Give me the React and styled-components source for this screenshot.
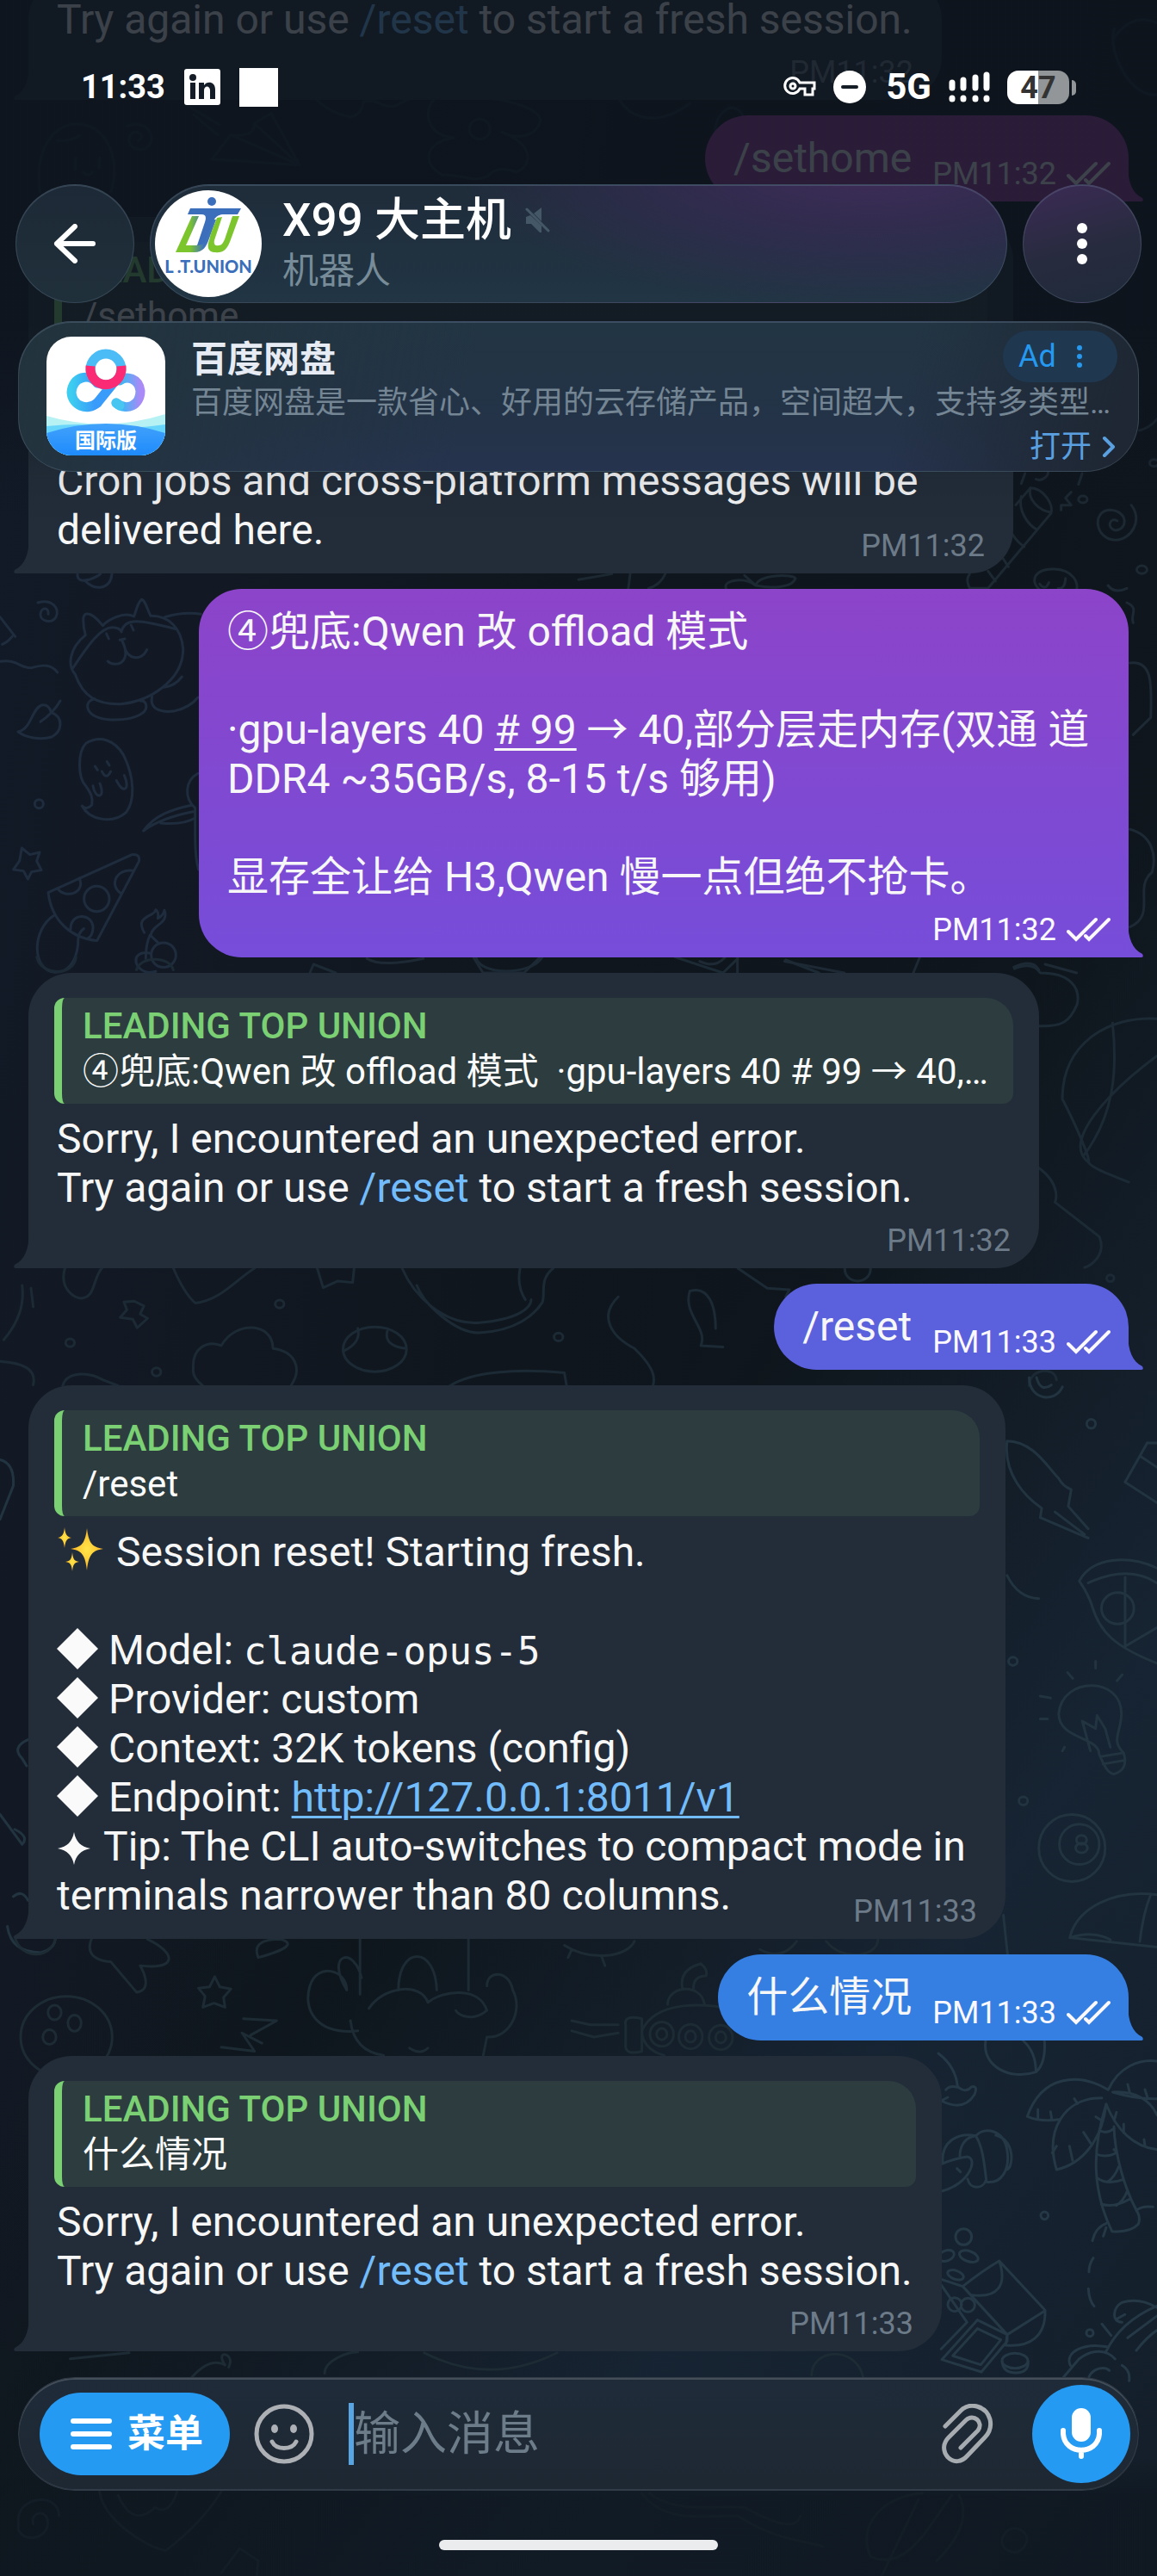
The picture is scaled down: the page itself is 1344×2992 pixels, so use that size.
import React from "react";
import styled, { createGlobalStyle } from "styled-components";

const GlobalStyle = createGlobalStyle`
  *, *::before, *::after { box-sizing: border-box; }
  body { margin: 0; background: #0f161d; }
  button, input { font: inherit; color: inherit; border: 0; padding: 0; background: none; outline: none; }
  a { color: inherit; }
  svg { display: block; flex: none; }
`;

const sans = `Roboto, "Noto Sans CJK SC", sans-serif`;
const accent = "#249af2";

const Screen = styled.div`
  position: relative;
  display: flex;
  flex-direction: column;
  height: 100vh;
  overflow: hidden;
  font-family: ${sans};
  color: #f7f7f8;
  background: linear-gradient(98deg, #121a28 0%, #121924 18%, #0f161d 45%, #0f151c 68%, #10171f 100%);
`;

const Shade = styled.div`
  position: absolute;
  inset: 0;
  background: linear-gradient(125deg, transparent 50%, rgba(14, 22, 28, 0.6) 58%, rgba(24, 38, 54, 0.85) 78%, rgba(20, 32, 44, 0.8) 100%);
`;

const Wallpaper = styled.svg`
  position: absolute;
  inset: 0;
  width: 100%;
  height: 100%;
  fill: none;
  stroke-linecap: round;
  stroke-linejoin: round;
  & path, & circle, & ellipse { vector-effect: non-scaling-stroke; stroke-width: 3px; }
`;

/* ---------- messages ---------- */

const Messages = styled.main`
  position: relative;
  flex: 1;
  min-height: 0;
  display: flex;
  flex-direction: column;
  justify-content: flex-end;
  gap: 18px;
  padding: 0 33px 30px;
`;

const Bubble = styled.article`
  position: relative;
  flex: none;
  width: ${(p) => (p.$max ? "100%" : "fit-content")};
  max-width: ${(p) => (p.$max ? `${p.$max}px` : "100%")};
  align-self: ${(p) => (p.$out ? "flex-end" : "flex-start")};
  padding: ${(p) => (p.$reply ? "29px 30px 11px" : p.$out ? "21px 21px 11px 30px" : "21px 30px 11px")};
  border-radius: ${(p) => (p.$out ? "50px 50px 0 50px" : "50px 50px 50px 0")};
  background: ${(p) => p.$fill || "#222d39"};
`;

const TailShape = styled.svg`
  position: absolute;
  bottom: 0;
  width: 18px;
  height: 40px;
  ${(p) => (p.$out ? "left: calc(100% - 1px);" : "right: calc(100% - 1px);")}
`;

const Content = styled.div`
  display: ${(p) => (p.$side ? "flex" : "grid")};
  gap: ${(p) => (p.$side ? "24px" : "0")};
`;

const Copy = styled.p`
  grid-area: 1 / 1;
  margin: 0 0 ${(p) => (p.$below ? "54px" : "11px")};
  padding-left: 3px;
  font-size: 48px;
  line-height: 57px;
  white-space: pre-wrap;
`;

const Stamp = styled.time`
  grid-area: 1 / 1;
  align-self: end;
  justify-self: end;
  display: flex;
  gap: 12px;
  padding-right: ${(p) => (p.$out ? "0" : "3px")};
  font-size: 36px;
  line-height: 42px;
  white-space: nowrap;
  color: ${(p) => (p.$out ? "#fbf9ff" : "#6d7b89")};
`;

const Quote = styled.blockquote`
  margin: 0 0 12px;
  height: 123px;
  padding: 6px 26px 0 24px;
  border-left: 9px solid #7ad073;
  border-radius: 12px 32px 12px 12px;
  background: #2c3c3f;
  font-size: 42px;
  line-height: 53px;
  color: #fcfcfc;
`;

const QuoteName = styled.div`
  font-weight: 500;
  color: #7ad073;
`;

const QuoteText = styled.div`
  overflow: hidden;
  white-space: pre;
  text-overflow: ellipsis;
`;

const Command = styled.a`
  color: #73bcfc;
  text-decoration: ${(p) => (p.$line ? "underline" : "none")};
  text-decoration-thickness: 3px;
  text-underline-offset: 5px;
`;

const Under = styled.u`
  text-decoration-thickness: 3px;
  text-underline-offset: 5px;
`;

const Mono = styled.code`
  font-family: "DejaVu Sans Mono", "Liberation Mono", monospace;
  font-size: 44px;
  line-height: 50px;
`;

const Glyph = styled.svg`
  display: inline-block;
  vertical-align: -6px;
  margin-right: ${(p) => p.$gap}px;
`;

/* ---------- header ---------- */

const Header = styled.header`
  position: absolute;
  inset: 0 0 auto;
  padding-bottom: 80px;
  background: linear-gradient(rgba(13, 20, 29, 0.8) 60%, rgba(13, 20, 29, 0.1) 88%, transparent 97%);
`;

const StatusBar = styled.div`
  display: flex;
  align-items: center;
  height: 214px;
  padding: 0 102px 12px 94px;
  color: #fff;
`;

const Clock = styled.span`
  width: 120px;
  font: 700 38px/50px ${sans};
`;

const WhiteSquare = styled.span`
  width: 45px;
  height: 45px;
  margin-left: 22px;
  background: #fff;
`;

const StatusRight = styled.div`
  display: flex;
  align-items: center;
  gap: 20px;
  margin-left: auto;
`;

const Network = styled.span`
  padding-left: 3px;
  font: 700 42px/50px ${sans};
`;

const Battery = styled.span`
  position: relative;
  width: 72px;
  height: 39px;
  border-radius: 13px;
  background: linear-gradient(90deg, #fff 50%, #929698 50%);
  color: #333;
  font: 700 36px/40px ${sans};
  text-align: center;
  &::after {
    content: "";
    position: absolute;
    left: 75px;
    top: 11px;
    width: 5px;
    height: 18px;
    border-radius: 0 5px 5px 0;
    background: #929698;
  }
`;

const Toolbar = styled.div`
  display: flex;
  gap: 18px;
  padding: 0 18px;
`;

const glass = `
  border: 1px solid rgba(120, 145, 165, 0.28);
  box-shadow: inset 0 1px 0 rgba(140, 160, 185, 0.25);
`;

const RoundButton = styled.button`
  ${glass}
  flex: none;
  display: grid;
  place-items: center;
  width: 138px;
  height: 138px;
  border-radius: 50%;
  background: ${(p) => p.$fill};
`;

const TitlePill = styled.div`
  ${glass}
  flex: 1;
  display: flex;
  align-items: center;
  gap: 24px;
  height: 138px;
  padding-left: 5px;
  border-radius: 69px;
  background:
    radial-gradient(ellipse 480px 170px at 84% -20%, rgba(66, 44, 92, 0.95), rgba(56, 43, 86, 0.65) 50%, transparent),
    linear-gradient(#1f2c3a, #213544);
`;

const TitleBlock = styled.div`
  display: flex;
  flex-direction: column;
`;

const Title = styled.h1`
  display: flex;
  align-items: center;
  gap: 16px;
  margin: 0;
  font-size: 53px;
  font-weight: 500;
  line-height: 64px;
  color: #fff;
`;

const Subtitle = styled.span`
  font-size: 42px;
  line-height: 54px;
  color: #778c98;
`;

const Ad = styled.section`
  ${glass}
  display: flex;
  gap: 30px;
  height: 175px;
  margin: 21px 21px 0;
  padding: 17px 24px 0 32px;
  border-radius: 62px;
  background: linear-gradient(100deg, #22333d 0%, rgba(34, 51, 61, 0) 40%),
    linear-gradient(285deg, #1e2733 3%, transparent 22%),
    linear-gradient(#223543, #243348 70%, #26334e);
`;

const AdBody = styled.div`
  flex: 1;
  min-width: 0;
  display: flex;
  flex-direction: column;
  padding-top: 2px;
`;

const AdRow = styled.div`
  display: flex;
  justify-content: space-between;
`;

const AdTitle = styled.h2`
  margin: 0;
  font-size: 42px;
  line-height: 50px;
  font-weight: 700;
  color: #e6ebf4;
`;

const AdText = styled.p`
  margin: 0;
  overflow: hidden;
  font-size: 36px;
  line-height: 50px;
  white-space: nowrap;
  text-overflow: ellipsis;
  color: #748594;
`;

const AdBadge = styled.button`
  display: flex;
  align-items: center;
  gap: 24px;
  width: 133px;
  height: 60px;
  margin: -9px 0 -1px;
  padding-left: 18px;
  border-radius: 30px;
  background: #1f374f;
  color: #2599f0;
  font-size: 36px;
`;

const AdOpen = styled.a`
  display: flex;
  align-items: center;
  align-self: flex-end;
  gap: 12px;
  margin-right: 2px;
  font-size: 36px;
  line-height: 52px;
  text-decoration: none;
  color: #5aa0e0;
`;

/* ---------- composer ---------- */

const Footer = styled.footer`
  position: relative;
  padding: 0 21px 30px;
  background: linear-gradient(transparent 40%, rgba(14, 22, 30, 0.65) 60%);
`;

const Composer = styled.form`
  display: flex;
  align-items: center;
  height: 132px;
  padding: 0 9px 0 24px;
  border-radius: 66px;
  border: 1px solid #303b47;
  box-shadow: inset 0 2px 0 #434e59, inset 0 -1px 0 #303b47;
  background: linear-gradient(#1f2b39, #1e2833);
`;

const MenuButton = styled.button`
  display: flex;
  align-items: center;
  gap: 18px;
  height: 96px;
  padding: 0 31px 0 36px;
  border-radius: 48px;
  background: ${accent};
  color: #fff;
  font-size: 44px;
  font-weight: 700;
  line-height: 60px;
`;

const IconButton = styled.button`
  display: grid;
  place-items: center;
  width: ${(p) => p.$w}px;
  height: 96px;
`;

const Caret = styled.span`
  width: 6px;
  height: 72px;
  margin-left: 12px;
  background: #57a5e2;
`;

const Field = styled.input`
  flex: 1;
  min-width: 0;
  height: 90px;
  font-size: 54px;
  &::placeholder { color: #6d7c89; opacity: 1; }
`;

const MicButton = styled.button`
  display: grid;
  place-items: center;
  width: 114px;
  height: 114px;
  margin-left: 30px;
  border-radius: 50%;
  background: ${accent};
`;

const HomeBar = styled.div`
  width: 324px;
  height: 12px;
  margin: 57px auto 0;
  border-radius: 6px;
  background: #ebecee;
`;

/* ---------- drawings ---------- */

const Tail = ({ out, fill }) => (
  <TailShape $out={out} viewBox="0 0 18 40" aria-hidden="true">
    <path
      fill={fill}
      d={out ? "M0 0C1 18 5 30 17 36Q19 40 16 40H0Z" : "M18 0C17 18 13 30 1 36Q-1 40 2 40H18Z"}
    />
  </TailShape>
);

const Checks = () => (
  <svg width="51" height="42" viewBox="0 0 51 42" fill="none" stroke="currentColor" strokeWidth="4" strokeLinecap="round" aria-hidden="true">
    <path d="M2 23 11 32 34 9" />
    <path d="M22 28 26 32 49 9" />
  </svg>
);

const Diamond = () => (
  <Glyph $gap={12} width="48" height="48" viewBox="0 0 48 48" aria-hidden="true">
    <path d="M24 0 48 24 24 48 0 24Z" fill="#fafafa" />
  </Glyph>
);

const Star = () => (
  <Glyph $gap={14} width="40" height="40" viewBox="0 0 40 40" aria-hidden="true">
    <path d="M20 1C22 12 28 18 39 20 28 22 22 28 20 39 18 28 12 22 1 20 12 18 18 12 20 1Z" fill="#fafafa" />
  </Glyph>
);

const Sparkles = () => (
  <Glyph $gap={14} width="55" height="52" viewBox="0 0 55 52" aria-hidden="true">
    <defs>
      <radialGradient id="gold">
        <stop offset="0" stopColor="#ffe54a" />
        <stop offset="0.6" stopColor="#fcc934" />
        <stop offset="1" stopColor="#f0a32c" />
      </radialGradient>
    </defs>
    <g fill="url(#gold)">
      <path d="M35 2C37 18 40 24 54 26 40 28 37 34 35 51 33 34 30 28 16 26 30 24 33 18 35 2Z" />
      <path d="M9 1C10 10 12 12 17 13 12 14 10 16 9 25 8 16 6 14 1 13 6 12 8 10 9 1Z" />
      <path d="M18 30C19 38 20 40 26 41 20 42 19 44 18 52 17 44 16 42 10 41 16 40 17 38 18 30Z" />
    </g>
  </Glyph>
);

const Doodles = () => (
  <Wallpaper viewBox="0 0 1344 2992" preserveAspectRatio="xMidYMid slice" aria-hidden="true">
    <g stroke="#1e2c3d" transform="translate(0 650) scale(0.3333)">
      <path d="M270 50Q268 80 310 70Q340 60 350 50M295 72C330 110 385 105 390 50" />
      <path d="M132 150C180 135 210 170 195 200C180 225 140 215 141 190C143 165 172 165 168 190" />
      <path d="M0 200 53 268M8 295Q30 285 42 268M0 355C60 345 70 380 110 377C150 365 180 365 200 393" />
      <path d="M298 263C240 310 235 370 262 400C290 480 340 505 420 503C520 495 640 420 638 310C632 240 590 195 525 196C510 165 505 140 493 139C480 150 475 175 467 198C430 180 375 210 358 230C330 195 300 175 291 200Q288 230 298 263M254 378C290 325 350 225 400 237Q420 240 423 252C435 200 490 210 612 242" />
      <path d="M371 258 379 276M457 228 465 246M418 280 435 276M425 282C450 330 435 365 400 364Q385 364 376 354M437 315C455 350 495 350 512 314" />
      <path d="M330 485C290 490 290 555 390 558C480 560 520 530 507 500Q500 490 490 492M530 478C520 520 560 535 610 527C640 520 670 505 690 480M572 445Q610 440 634 408M575 200Q640 180 700 190" />
      <path d="M63 600C110 590 110 520 145 507Q170 503 178 532C225 550 215 600 180 618C140 630 90 620 63 600M141 565Q185 535 210 492" />
      <path d="M300 790C270 760 270 670 300 640C350 610 400 630 430 680C470 760 470 840 440 880C390 925 310 905 286 858Q300 875 320 855C325 820 312 810 300 790M331 720 340 733M373 704 381 717M355 738Q370 770 386 738M324 788C330 835 370 835 348 780M406 770C430 820 455 800 433 752" />
      <circle cx="136" cy="851" r="15" />
      <path d="M76 1005 104 1028 138 1020 128 1050 144 1082 110 1088 97 1113 82 1085 47 1080 68 1050Z" />
      <path d="M168 1160 460 1028Q490 1025 484 1052L338 1328C250 1320 180 1260 168 1160ZM200 1146C230 1185 300 1160 276 1110M465 1084C400 1075 380 1140 424 1164M246 1288C245 1230 320 1230 324 1280Q325 1310 304 1322M292 1286Q270 1300 272 1340C265 1410 230 1440 190 1438C110 1430 110 1290 188 1240" />
      <circle cx="337" cy="1182" r="44" />
      <circle cx="570" cy="1378" r="43" />
      <path d="M543 1435C500 1450 460 1410 478 1382Q495 1365 524 1372M508 1390Q508 1340 523 1308L550 1334M503 1300C480 1260 500 1250 530 1235Q540 1230 543 1220Q555 1230 550 1250Q570 1240 573 1222C590 1270 530 1270 525 1310" />
      <path d="M500 945C540 890 600 870 670 855M500 945Q560 900 680 877M560 918Q640 925 680 900M690 745C645 770 640 830 680 865V960Q680 1040 692 1080" />
    </g>
    <g stroke="#253845" transform="translate(1090 2370) scale(0.3333)">
      <path d="M165 0C150 90 250 140 340 110Q375 80 370 0M295 0Q340 40 340 108M0 45Q60 90 67 160Q95 185 115 162Q140 155 125 190C100 230 60 235 10 210L33 198M26 172Q40 155 67 163" />
      <path d="M15 425C10 350 70 320 130 332M75 403C75 360 100 335 130 332C155 370 160 430 167 485C155 520 110 520 102 483M133 330C160 300 230 310 240 385C250 450 220 500 168 493M200 330C270 350 260 440 240 450M12 430Q60 410 100 405C140 410 110 500 12 525M65 446 77 458" />
      <path d="M310 265C360 120 490 110 592 172C630 90 700 65 762 72M310 265Q360 285 420 275M570 200C440 200 370 310 412 450C500 430 570 350 585 222M608 180C690 175 740 210 762 260M585 222C620 310 680 370 762 380M608 180Q690 205 762 203" />
      <path d="M347 240V272M391 248 395 272M474 203 485 220M549 266 573 281M506 320 531 358M412 368 397 392M457 368 468 418M621 250 613 277M646 291V322M717 345 720 366M660 153 667 182M720 171 728 196" />
      <path d="M585 222C535 380 535 520 605 665Q670 670 697 640Q705 620 695 600C650 520 615 400 612 300M568 316Q590 325 610 308M553 397Q590 410 622 390L612 380M555 480Q590 505 643 485M628 440Q615 475 590 493M568 570Q610 585 668 552M658 525Q645 560 620 575" />
      <path d="M690 592Q710 575 748 580M586 637Q548 650 537 698M585 652 575 682M540 758Q525 780 525 806M523 865Q525 905 543 926M570 988 602 1028M15 420" />
      <circle cx="370" cy="610" r="13" /><circle cx="88" cy="684" r="28" /><circle cx="528" cy="1019" r="12" /><circle cx="103" cy="922" r="24" /><circle cx="57" cy="920" r="24" />
      <ellipse cx="60" cy="817" rx="29" ry="15" transform="rotate(20 60 817)" />
      <ellipse cx="106" cy="752" rx="34" ry="18" transform="rotate(20 106 752)" />
      <ellipse cx="28" cy="750" rx="28" ry="18" transform="rotate(-20 28 750)" />
      <path d="M85 857Q150 805 212 768L372 940C375 1030 320 1070 235 1062L240 1025 370 943M212 768C240 850 210 900 115 887M85 857 240 1025V1048L150 1155 12 1112 136 974M10 832 85 857M10 852 100 982 10 1075M136 1004 218 1043 148 1130 50 1099ZM136 974 240 1025" />
      <ellipse cx="267" cy="1116" rx="45" ry="26" />
      <path d="M222 1118Q225 1158 270 1158T313 1118M436 1174 490 1110C540 1070 590 1080 616 1110M460 1132C440 1090 500 1050 592 1068M584 1085C620 1010 680 960 762 925M640 982C600 980 610 930 640 913Q700 895 760 930M623 970 650 955M660 1036 762 960M690 1080Q730 1030 762 1010M525 1172C540 1140 580 1135 596 1150M640 1132Q670 1150 665 1186" />
    </g>
    <g stroke="#1c2a35" transform="translate(0 1110) scale(0.857 0.333)">
      <path d="M50 5C55 70 100 75 103 5M185 50C190 0 230 0 235 50M420 60 425 30 455 60M645 5C650 70 720 70 735 5M915 5 980 60 1000 10M1065 15 1110 60M1375 45Q1400 20 1410 60C1450 60 1465 110 1460 170C1450 230 1440 250 1405 245" />
      <path d="M1568 220C1500 210 1440 310 1440 500C1460 600 1480 720 1475 720C1440 650 1500 480 1568 350M1508 235C1515 400 1510 560 1468 700M1408 740C1440 800 1430 860 1430 860L1490 980C1500 1040 1480 1080 1470 1088M1530 790C1500 760 1480 740 1475 720" />
      <path d="M88 1090C80 1160 100 1195 110 1195C130 1190 125 1130 138 1090M235 1090Q250 1180 265 1212C300 1200 320 1130 345 1090M430 1090 438 1158 458 1135 478 1140 480 1090" />
      <path d="M182 1205 195 1222 190 1250 200 1265 186 1298 180 1268 163 1262 172 1235 168 1208Z" />
      <path d="M545 1090C560 1180 600 1290 650 1280C700 1270 720 1230 720 1200M565 1150C575 1220 620 1320 650 1315C700 1310 725 1250 735 1210C740 1180 730 1130 750 1090M705 1090Q700 1150 712 1200" />
      <ellipse cx="508" cy="1373" rx="43" ry="78" />
      <path d="M465 1380Q490 1350 485 1300M550 1370Q520 1360 525 1310M262 1440C260 1370 280 1340 300 1360C320 1270 370 1280 370 1370C400 1380 410 1440 395 1497M275 1500Q260 1470 262 1440M0 1415C30 1420 50 1440 45 1497M85 1500C90 1450 120 1450 140 1480L160 1500" />
      <path d="M838 1190C810 1260 830 1330 860 1370C880 1420 890 1460 885 1500M935 1170C925 1250 960 1300 950 1360L980 1365M935 1170C960 1150 970 1220 970 1300M1000 1090 1040 1160 1070 1165 1065 1190M1145 1090C1145 1150 1180 1150 1180 1090M610 1500C640 1450 700 1440 765 1455L768 1500M30 1150Q35 1250 5 1340M42 1160 45 1225M1395 1500C1395 1440 1430 1430 1432 1480" />
      <ellipse cx="379" cy="1215" rx="6" ry="14" /><ellipse cx="757" cy="1330" rx="6" ry="14" /><ellipse cx="95" cy="1350" rx="6" ry="14" /><ellipse cx="1505" cy="1125" rx="5" ry="12" /><ellipse cx="212" cy="1452" rx="6" ry="14" />
    </g>
    <g stroke="#223440" transform="translate(0 1600) scale(0.857 0.4337)">
      <path d="M1365 170C1360 260 1390 320 1412 350L1410 375 1475 430M1365 170C1400 170 1420 240 1435 270Q1440 290 1452 300L1448 345 1475 405M1430 360 1470 420M1395 0C1395 60 1430 70 1440 25M1405 0Q1410 40 1425 20" />
      <path d="M1555 175 1525 280 1568 335M1555 175H1568M1545 210 1568 240M1463 545C1480 480 1530 475 1568 510M1463 545Q1475 580 1480 610C1490 680 1510 720 1568 765M1475 550Q1530 500 1568 550M1525 535V720L1568 670" />
      <ellipse cx="1515" cy="618" rx="22" ry="42" /><ellipse cx="1479" cy="124" rx="6" ry="12" /><ellipse cx="1373" cy="760" rx="6" ry="11" /><ellipse cx="1387" cy="1134" rx="6" ry="11" />
      <path d="M1490 1010C1490 960 1435 970 1435 900C1440 800 1520 800 1520 900C1520 950 1505 970 1523 1005Q1530 1050 1510 1062C1500 1060 1495 1030 1490 1010M1492 1015 1523 1005M1495 1035 1525 1025M1478 1000 1467 920 1485 940 1487 905 1498 940 1505 990M1485 760V778M1447 790 1454 806M1521 796 1514 812M1410 853 1424 858M1410 914H1420M1440 1000 1443 990" />
      <ellipse cx="1453" cy="1260" rx="45" ry="90" /><ellipse cx="1463" cy="1250" rx="27" ry="54" /><ellipse cx="1466" cy="1238" rx="7" ry="12" /><ellipse cx="1466" cy="1260" rx="8" ry="13" />
      <path d="M1450 1500C1460 1420 1510 1370 1568 1385M1450 1500Q1480 1480 1505 1505M1545 1510Q1550 1430 1560 1385M1450 1500 1568 1525M1365 530Q1380 590 1408 592M1360 1440 1367 1568" />
      <path d="M20 1210Q40 1230 30 1250L0 1170M0 220Q20 230 18 290L0 380M38 970Q15 990 30 1020L36 1040M18 1390Q30 1370 38 1400M10 1470Q15 1540 55 1540 75 1530 75 1500" />
    </g>
    <g stroke="#1d2b34" transform="translate(0 2250) scale(0.857 0.4733)">
      <path d="M20 0C30 60 70 50 75 5M125 0C110 60 150 60 150 60L185 135C210 130 190 70 190 70 240 80 240 40 200 5M350 50Q340 5 380 5 410 20 350 50" />
      <ellipse cx="90" cy="245" rx="62" ry="100" /><ellipse cx="74" cy="185" rx="9" ry="18" /><ellipse cx="101" cy="211" rx="9" ry="20" /><ellipse cx="67" cy="245" rx="9" ry="18" />
      <path d="M291 97 298 122 313 127 303 148 305 172 290 162 275 172 278 145 269 125 284 122Z" />
      <path d="M485 230C430 240 410 180 420 120C430 60 470 80 470 130C440 40 480 20 490 100M500 175C520 120 570 110 580 160C600 130 650 120 660 180C640 210 620 190 618 180M660 245C690 250 710 180 695 130C690 80 660 80 660 120M488 0V140M540 130C540 20 590 20 592 130M635 0V130M475 205Q480 280 520 290M660 245 655 290M555 272Q570 290 580 272" />
      <path d="M300 270 345 280 328 235 355 260M330 200 375 205 340 240M775 205 800 215 838 215M775 230 805 245 838 235M848 215Q845 190 870 200V280Q850 290 848 270ZM870 230C890 150 960 165 990 175M870 230C870 270 890 285 900 290M905 165C905 120 950 110 955 165M925 125Q920 80 950 65Q960 80 957 95Q940 95 940 125" />
      <ellipse cx="897" cy="238" rx="16" ry="30" /><ellipse cx="936" cy="244" rx="16" ry="30" /><ellipse cx="977" cy="246" rx="16" ry="30" /><ellipse cx="897" cy="238" rx="7" ry="14" /><ellipse cx="936" cy="244" rx="7" ry="14" /><ellipse cx="977" cy="246" rx="7" ry="14" />
      <path d="M95 1035 175 1020M440 1070C440 1040 470 1018 485 1018M575 1020C640 1080 700 1070 755 1020M1100 1075C1100 1010 1160 1000 1170 1080M260 1080Q285 1030 305 1050C290 1010 320 1020 310 1055M1030 30Q1060 60 1080 10M1120 10C1140 60 1190 50 1190 5M765 20C800 60 850 50 860 10M770 50 775 30M820 70 815 45" />
      <path d="M135 1360C140 1430 200 1500 225 1505C250 1470 280 1420 300 1360M160 1370Q180 1450 210 1400 230 1420 240 1360M25 1440C20 1370 80 1360 80 1420M45 1440C40 1410 65 1400 65 1440 60 1490 20 1480 25 1440M300 1560 325 1500 350 1530 348 1568M870 1365C900 1440 960 1420 1000 1420 1050 1480 1090 1480 1115 1495M880 1365C920 1420 980 1390 1010 1400 1060 1450 1080 1450 1085 1420M1180 1520C1160 1440 1200 1370 1250 1365M1180 1520C1230 1560 1260 1440 1290 1370M1195 1568 1245 1380M1300 1370Q1320 1440 1270 1530M1360 1470C1370 1430 1400 1460 1390 1490 1380 1530 1350 1500 1360 1470" />
    </g>
    <g stroke="#1c2832" transform="translate(672 360) scale(0.4286 0.3333)">
      <path d="M1185 680 1225 620C1260 620 1290 680 1280 710L1110 970H1060C1050 940 1055 930 1060 920M1225 620C1215 660 1250 700 1280 705M1200 650C1190 700 1220 750 1242 765M1175 780Q1190 810 1208 825M1150 865 1165 895M1110 910 1130 945" />
      <path d="M1498 680C1530 730 1500 800 1455 802C1400 800 1390 700 1440 697C1490 700 1490 765 1455 768C1430 760 1440 720 1460 735M1335 635 1320 655 1335 680 1308 680V697M1210 570 1200 605M1240 590C1260 600 1280 570 1270 560M1365 570 1355 608" />
      <circle cx="1367" cy="660" r="12" /><circle cx="1527" cy="905" r="14" /><circle cx="1560" cy="533" r="12" />
      <path d="M1250 975C1220 940 1240 900 1290 903C1340 905 1355 950 1350 975M1250 955Q1265 980 1275 950M1320 935Q1318 975 1300 970M400 970C390 940 450 930 480 960C490 920 580 920 588 935 580 970 520 970 480 960L450 925M0 940 90 920M140 920 135 970M235 920Q220 960 190 970M1520 420Q1550 410 1568 380" />
    </g>
    <g stroke="#1d2934" transform="translate(200 680) scale(0.7296 0.3333)">
      <path d="M1520 60C1540 80 1525 100 1530 130M1525 270C1560 260 1560 340 1558 460L1530 520M1525 850C1560 870 1568 940 1560 1000C1530 1050 1568 1150 1525 1190M1490 0Q1500 30 1520 10M310 1300C330 1330 380 1310 400 1300M480 1297 495 1350H560L585 1297M840 1310C870 1340 880 1290 880 1297M900 1297V1350M975 1310 1070 1350M1180 1350 1190 1297M1340 1330Q1370 1300 1380 1340M1390 1320 1440 1350" />
    </g>
    <g stroke="#1a2a36" transform="scale(0.4286 0.3333)">
      <path d="M850 335C880 380 920 400 950 408Q980 400 985 355C1020 340 1040 380 1070 370L1115 340M1265 340C1300 330 1460 360 1465 420C1450 490 1380 480 1360 460C1440 500 1450 570 1400 600C1360 580 1340 590 1320 615C1280 640 1230 600 1200 610C1150 580 1140 500 1230 480C1150 470 1150 380 1175 350" />
      <ellipse cx="1300" cy="450" rx="28" ry="35" />
      <path d="M108 670C90 500 160 430 207 432C290 430 330 560 300 670M155 490Q190 495 215 472M205 550V590M270 550 268 585M225 600Q240 620 250 600M345 440C410 410 430 500 390 520C340 530 340 460 370 460Q395 470 375 490M575 555 625 470 812 575 573 555M625 470Q690 480 690 430L735 395 812 575M690 430 812 575M510 370 595 435M525 400 590 470" />
      <path d="M1680 350C1720 430 1800 430 1870 360M1940 480C1930 400 1980 360 1995 380 2020 390 2020 440 2010 500M1940 560 1950 640M3020 100C3000 170 3060 340 3136 330M3020 130C3060 60 3100 60 3136 80M3170 540 3195 550 3190 640" />
    </g>
  </Wallpaper>
);

const CompanyLogo = () => (
  <svg width="124" height="124" viewBox="0 0 124 124" role="img" aria-label="L.T.UNION">
    <defs>
      <linearGradient id="lt" x1="0" x2="1">
        <stop offset="0.35" stopColor="#7cc52c" />
        <stop offset="0.7" stopColor="#3f72bd" />
      </linearGradient>
    </defs>
    <circle cx="62" cy="62" r="62" fill="#fff" />
    <circle cx="66" cy="13" r="5" fill="#3c6fbb" />
    <path d="M51 30H43L24 72H46C56 72 60 65 63 56L71 34H64L56 55C54 62 52 64 46 64H36Z" fill="url(#lt)" />
    <path d="M90 30H98L87 60C83 70 78 73 70 72 62 72 60 66 63 58L65 50 72 32 78 31 69 58C68 63 70 65 74 64 78 64 79 61 81 57Z" fill="#7cc52c" />
    <path d="M41 21H100L96 28H80C71 28 68 34 66 40L59 57C57 62 54 64 49 64L58 37C60 31 59 28 54 28H38Z" fill="#3c6fbb" />
    <text x="62" y="96" textAnchor="middle" fontFamily="Lato, sans-serif" fontWeight="900" fontSize="20" fill="#3c6fbb">L .T.UNION</text>
  </svg>
);

const CloudLogo = () => (
  <svg width="138" height="138" viewBox="0 0 138 138" role="img" aria-label="百度网盘 国际版">
    <defs>
      <linearGradient id="loopR" x1="0" x2="1"><stop offset="0.2" stopColor="#38b8f4" /><stop offset="1" stopColor="#a98af6" /></linearGradient>
      <linearGradient id="loopL" x1="0" x2="1"><stop offset="0" stopColor="#3ccdf0" /><stop offset="1" stopColor="#3a96fb" /></linearGradient>
      <linearGradient id="banner" x1="0" x2="0" y1="0" y2="1"><stop offset="0" stopColor="#42a2fb" /><stop offset="1" stopColor="#1e8bfc" /></linearGradient>
      <clipPath id="tile"><rect width="138" height="138" rx="29" /></clipPath>
    </defs>
    <g clipPath="url(#tile)">
      <rect width="138" height="138" fill="#fff" />
      <path d="M0 92Q68 112 138 90V138H0Z" fill="#b6f1f4" />
      <path d="M0 104Q40 100 69 104T138 102V138H0Z" fill="#68d5fb" />
      <path d="M0 112Q69 90 138 112V138H0Z" fill="url(#banner)" />
      <g fill="none" strokeWidth="11" strokeLinecap="round">
        <path d="M59 77C47 87 30 80 29 65 30 46 50 42 59 54" stroke="url(#loopL)" />
        <path d="M59 77 76 56" stroke="#3a9cfa" />
        <path d="M81 77C93 87 109 80 109 63 107 48 93 45 85 51" stroke="url(#loopR)" />
        <path d="M81 77Q83 79 85 80" stroke="#48c6f2" />
        <circle cx="69" cy="38" r="18" stroke="#4bbcf5" />
        <path d="M51 34C49 63 89 63 87 34" stroke="#fb2a75" strokeLinecap="butt" />
      </g>
      <text x="69" y="129" textAnchor="middle" fontFamily="Noto Sans CJK SC, sans-serif" fontWeight="700" fontSize="24" fill="#fff">国际版</text>
    </g>
  </svg>
);

const Dots = ({ r, gap, color }) => (
  <svg width={r * 2} height={gap * 2 + r * 2} viewBox={`0 0 ${r * 2} ${gap * 2 + r * 2}`} fill={color} aria-hidden="true">
    <circle cx={r} cy={r} r={r} />
    <circle cx={r} cy={r + gap} r={r} />
    <circle cx={r} cy={r + gap * 2} r={r} />
  </svg>
);

/* ---------- message pieces ---------- */

function Message({ out, reply, max, fill, tail, time, below, side, children }) {
  return (
    <Bubble $out={out} $reply={!!reply} $max={max} $fill={fill}>
      <Tail out={out} fill={tail || fill || "#222d39"} />
      {reply && (
        <Quote>
          <QuoteName>LEADING TOP UNION</QuoteName>
          <QuoteText>{reply}</QuoteText>
        </Quote>
      )}
      <Content $side={side}>
        <Copy $below={below}>{children}</Copy>
        <Stamp $out={out}>
          {time}
          {out && <Checks />}
        </Stamp>
      </Content>
    </Bubble>
  );
}

const ErrorText = () => (
  <>
    {"Sorry, I encountered an unexpected error.\nTry again or use "}
    <Command href="#reset">/reset</Command>
    {" to start a fresh session."}
  </>
);

export default function App() {
  return (
    <Screen>
      <GlobalStyle />
      <Shade />
      <Doodles />
      <Messages>
        <Message max={1061} time="PM11:32" below>
          {"Try again or use "}
          <Command href="#reset">/reset</Command>
          {" to start a fresh session."}
        </Message>
        <Message out side fill="#a03ca4" time="PM11:32">/sethome</Message>
        <Message reply="/sethome" max={1144} time="PM11:32">
          {"\n\nCron jobs and cross-platform messages will be\ndelivered here."}
        </Message>
        <Message out max={1080} fill="linear-gradient(#8c44c9, #764dd9)" tail="#764dd9" time="PM11:32" below>
          {"④兜底:Qwen 改 offload 模式\n\n·gpu-layers 40 "}
          <Under># 99</Under>
          {" → 40,部分层走内存(双通 道\nDDR4 ~35GB/s, 8-15 t/s 够用)\n\n显存全让给 H3,Qwen 慢一点但绝不抢卡。"}
        </Message>
        <Message reply="④兜底:Qwen 改 offload 模式  ·gpu-layers 40 # 99 → 40,部分层走内存" max={1174} time="PM11:32" below>
          <ErrorText />
        </Message>
        <Message out side fill="#5b60dc" time="PM11:33">/reset</Message>
        <Message reply="/reset" max={1135} time="PM11:33">
          <Sparkles />{"Session reset! Starting fresh.\n\n"}
          <Diamond />{"Model: "}<Mono>claude-opus-5</Mono>{"\n"}
          <Diamond />{"Provider: custom\n"}
          <Diamond />{"Context: 32K tokens (config)\n"}
          <Diamond />{"Endpoint: "}<Command $line href="http://127.0.0.1:8011/v1">http://127.0.0.1:8011/v1</Command>{"\n"}
          <Star />{"Tip: The CLI auto-switches to compact mode in\nterminals narrower than 80 columns."}
        </Message>
        <Message out side fill="#357fe3" time="PM11:33">什么情况</Message>
        <Message reply="什么情况" max={1061} time="PM11:33" below><ErrorText /></Message>
      </Messages>

      <Footer>
        <Composer onSubmit={(e) => e.preventDefault()}>
          <MenuButton type="button">
            <svg width="48" height="36" viewBox="0 0 48 36" stroke="#fff" strokeWidth="6" strokeLinecap="round" aria-hidden="true">
              <path d="M3 3H45M3 18H45M3 33H45" />
            </svg>
            菜单
          </MenuButton>
          <IconButton type="button" $w={126} aria-label="表情">
            <svg width="70" height="70" viewBox="0 0 70 70" fill="none" stroke="#adb0b5" strokeWidth="5" strokeLinecap="round">
              <circle cx="35" cy="35" r="32" />
              <path d="M21 44C26 54 44 54 49 44" />
              <ellipse cx="24" cy="29" rx="4" ry="5" fill="#adb0b5" stroke="none" />
              <ellipse cx="46" cy="29" rx="4" ry="5" fill="#adb0b5" stroke="none" />
            </svg>
          </IconButton>
          <Caret />
          <Field type="text" aria-label="输入消息" placeholder="输入消息" />
          <IconButton type="button" $w={90} aria-label="附件">
            <svg width="60" height="70" viewBox="0 0 60 70" fill="none" stroke="#a7acb1" strokeWidth="5" strokeLinecap="round">
              <path d="M4 26 22 8C33 -3 52 3 56 18 58 27 56 33 50 39L30 60C23 68 14 69 7 62 1 55 1 46 8 39L28 19C37 11 49 21 42 31L22 51" />
            </svg>
          </IconButton>
          <MicButton type="button" aria-label="语音">
            <svg width="48" height="60" viewBox="0 0 48 60" aria-hidden="true">
              <rect x="13" y="0" width="22" height="39" rx="11" fill="#fff" />
              <path d="M3 26V30C5 55 43 55 45 30V26M24 50V56" fill="none" stroke="#fff" strokeWidth="6" strokeLinecap="round" />
            </svg>
          </MicButton>
        </Composer>
        <HomeBar />
      </Footer>

      <Header>
        <StatusBar>
          <Clock>11:33</Clock>
          <svg width="42" height="42" viewBox="0 0 42 42" role="img" aria-label="LinkedIn">
            <rect width="42" height="42" rx="3" fill="#fff" />
            <g fill="#141c28">
              <circle cx="10" cy="10" r="4" />
              <rect x="7" y="16" width="6" height="19" />
              <path d="M17 16H23V19C26 14 36 14 36 24V35H30V25C30 19 23 19 23 25V35H17Z" />
            </g>
          </svg>
          <WhiteSquare />
          <StatusRight>
            <svg width="38" height="24" viewBox="0 0 38 24" fill="none" stroke="#fff" strokeWidth="3" aria-hidden="true">
              <path d="M19 7H36V14H34V21H25V14H19A9 9 0 1 1 19 7Z" />
              <circle cx="11" cy="11" r="3" />
            </svg>
            <svg width="38" height="38" viewBox="0 0 38 38" aria-hidden="true">
              <circle cx="19" cy="19" r="19" fill="#fff" />
              <path d="M11 19H27" stroke="#141c26" strokeWidth="4" strokeLinecap="round" />
            </svg>
            <Network>5G</Network>
            <svg width="48" height="36" viewBox="0 0 48 36" stroke="#fff" strokeWidth="7" strokeLinecap="round" aria-hidden="true">
              <path d="M4 13V19M17 10V19M31 7V19M44 4V19M4 31V32M17 31V32M31 31V32M44 31V32" />
            </svg>
            <Battery>47</Battery>
          </StatusRight>
        </StatusBar>

        <Toolbar>
          <RoundButton type="button" aria-label="返回" $fill="linear-gradient(#1d2936, #20303b)">
            <svg width="50" height="46" viewBox="0 0 50 46" fill="none" stroke="#fff" strokeWidth="6" strokeLinecap="round" strokeLinejoin="round">
              <path d="M46 23H4M25 3 4 23 25 43" />
            </svg>
          </RoundButton>
          <TitlePill>
            <CompanyLogo />
            <TitleBlock>
              <Title>
                X99 大主机
                <svg width="30" height="32" viewBox="0 0 30 32" fill="#435767" role="img" aria-label="静音">
                  <path d="M1 12 19 30V22L6 10ZM10 8 19 1V17ZM1 12V20H7L17 30H19V24L6 11Z" />
                  <path d="M2 3 27 28" stroke="#435767" strokeWidth="3" strokeLinecap="round" />
                </svg>
              </Title>
              <Subtitle>机器人</Subtitle>
            </TitleBlock>
          </TitlePill>
          <RoundButton type="button" aria-label="更多" $fill="linear-gradient(165deg, #3c2b56, #272b3e 55%, #1f2a3a)">
            <Dots r={6} gap={18} color="#fff" />
          </RoundButton>
        </Toolbar>

        <Ad>
          <CloudLogo />
          <AdBody>
            <AdRow>
              <AdTitle>百度网盘</AdTitle>
              <AdBadge type="button">Ad<Dots r={3} gap={10} color="#2599f0" /></AdBadge>
            </AdRow>
            <AdText>百度网盘是一款省心、好用的云存储产品，空间超大，支持多类型文件的备份、分享和查看</AdText>
            <AdOpen href="#open">
              打开
              <svg width="16" height="26" viewBox="0 0 16 26" fill="none" stroke="#5aa0e0" strokeWidth="4" strokeLinecap="round" strokeLinejoin="round">
                <path d="M3 3 13 13 3 23" />
              </svg>
            </AdOpen>
          </AdBody>
        </Ad>
      </Header>
    </Screen>
  );
}
